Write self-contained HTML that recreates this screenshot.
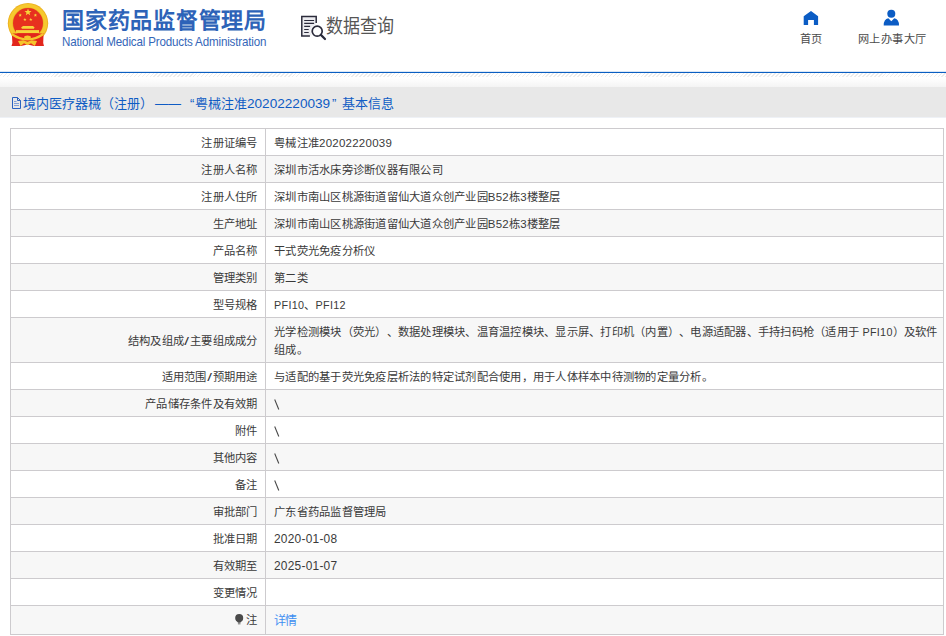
<!DOCTYPE html>
<html lang="zh-CN">
<head>
<meta charset="utf-8">
<style>
*{margin:0;padding:0;box-sizing:border-box;}
html,body{text-spacing-trim:space-all;width:946px;height:636px;overflow:hidden;background:#fff;font-family:"Liberation Sans",sans-serif;}
.abs{position:absolute;white-space:nowrap;}
.t-cn{left:62px;top:6px;font-size:22px;font-weight:bold;color:#2d63b8;line-height:30px;letter-spacing:0.75px;}
.t-en{left:62px;top:34.3px;font-size:11.6px;color:#3466b8;line-height:14px;letter-spacing:-0.16px;transform:scaleY(1.12);transform-origin:0 0;}
.sq-tx{left:326px;top:14px;font-size:17px;color:#555;line-height:24px;transform:scaleY(1.11);transform-origin:0 0;}
.nav-tx{font-size:11.2px;color:#4a4a4a;line-height:14px;letter-spacing:0.4px;}
.bl{left:0;top:71px;width:946px;height:2px;background:linear-gradient(rgba(10,94,194,0.15) 0,rgba(10,94,194,0.15) 1px,#0a5ec2 1px);}
.hatch{left:0;top:73px;width:946px;height:4px;
 background:repeating-linear-gradient(135deg,#fff 0,#fff 1.8px,#ececec 1.8px,#ececec 2.8px);}
.grad{left:0;top:78px;width:946px;height:9px;background:linear-gradient(#fff,#f4f4f4);}
.bar{left:0;top:87px;width:946px;height:31px;background:#e8e8e8;border-bottom:1px solid #eef1f6;}
.bt{font-size:13px;color:#0f5cc4;line-height:17px;top:94.7px;}
table{table-layout:fixed;position:absolute;left:10px;top:128px;width:934px;border-collapse:collapse;border:1px solid #c6c4c8;font-size:11.3px;color:#3a3a3a;letter-spacing:0.25px;}
td{border:1px solid #cdcbce;line-height:18px;padding:5px 8px 3px 8px;vertical-align:middle;}
.n{font-size:11.5px;}
.d{font-size:11.9px;}
.n2{font-size:10.8px;letter-spacing:0.3px;}
.sl{display:inline-block;transform:scaleX(1.5);margin:0 1.2px;}
.bs{vertical-align:-2px;}
td.l{width:255px;text-align:right;padding-right:7.5px;}
td{white-space:nowrap;}
tr:nth-child(even) td{background:#f7f7f7;}
tr.last td{padding-top:5px;padding-bottom:5px;}
a{color:#3f8ff2;text-decoration:none;font-size:12px;letter-spacing:-0.6px;position:relative;top:1px;}
</style>
</head>
<body>
<svg class="abs" style="left:0;top:0" width="56" height="56" viewBox="0 0 56 56">
  <circle cx="28" cy="23.2" r="20.2" fill="#eeb322"/>
  <circle cx="28" cy="23.2" r="19.2" fill="#f6c92e"/>
  <circle cx="28" cy="23" r="15.6" fill="#e8b020"/>
  <circle cx="28" cy="23" r="15.0" fill="#e7311f"/>
  <polygon points="28.00,8.50 28.91,10.94 31.52,11.06 29.48,12.68 30.17,15.19 28.00,13.75 25.83,15.19 26.52,12.68 24.48,11.06 27.09,10.94" fill="#f7d43a"/>
  <polygon points="20.20,13.40 20.64,14.59 21.91,14.64 20.92,15.43 21.26,16.66 20.20,15.96 19.14,16.66 19.48,15.43 18.49,14.64 19.76,14.59" fill="#f7d43a"/>
  <polygon points="35.40,13.40 35.84,14.59 37.11,14.64 36.12,15.43 36.46,16.66 35.40,15.96 34.34,16.66 34.68,15.43 33.69,14.64 34.96,14.59" fill="#f7d43a"/>
  <polygon points="24.90,17.80 25.34,18.99 26.61,19.04 25.62,19.83 25.96,21.06 24.90,20.36 23.84,21.06 24.18,19.83 23.19,19.04 24.46,18.99" fill="#f7d43a"/>
  <polygon points="30.80,17.80 31.24,18.99 32.51,19.04 31.52,19.83 31.86,21.06 30.80,20.36 29.74,21.06 30.08,19.83 29.09,19.04 30.36,18.99" fill="#f7d43a"/>
  <path d="M21.1 27.6 L23 25.9 H33 L34.6 27.6 L33.8 28.8 H22 Z" fill="#f7d43a"/>
  <rect x="16" y="30.1" width="23" height="3" fill="#f7d43a"/>
  <path d="M11.8 33.6 H43.6 L43.2 43 L44 46 H34 L27.6 44.5 L21 46 H11.5 L12.4 43 Z" fill="#e2261c"/>
  <path d="M11.6 34 Q27.5 45 43.4 34" fill="none" stroke="#f5c52c" stroke-width="2.2"/>
  <ellipse cx="27.5" cy="37.3" rx="3.4" ry="1.9" fill="#f5c52c"/>
  <path d="M18 41 L20.6 46 L24 43.3 L27.5 45.3 L31 43.3 L34.8 46 L37 41 L31.8 40.2 L27.5 41.8 L23.2 40.2 Z" fill="#f5c52c"/>
</svg>
<div class="abs t-cn">国家药品监督管理局</div>
<div class="abs t-en">National Medical Products Administration</div>
<svg class="abs" style="left:296px;top:10px" width="40" height="36" viewBox="296 10 40 36">
  <rect x="302.5" y="17.3" width="13" height="18" fill="#ececf0"/>
  <path d="M316.2 22.9 V16.6 H301.8 V35.9 H309.9" fill="none" stroke="#2b2b3b" stroke-width="1.5"/>
  <path d="M304.2 20.5 H314.1 M304.2 23.4 H314.1 M304.2 26.4 H310.1 M304.2 29.5 H308.7 M304.2 32.5 H308.7" stroke="#2b2b3b" stroke-width="1.2"/>
  <circle cx="317.2" cy="31.2" r="6.8" fill="#fff"/>
  <circle cx="317.2" cy="31.2" r="5.0" fill="#fff" stroke="#2b2b3b" stroke-width="1.7"/>
  <path d="M320.9 34.9 L325 39" stroke="#2b2b3b" stroke-width="2.2" stroke-linecap="round"/>
</svg>
<div class="abs sq-tx">数据查询</div>
<svg class="abs" style="left:796px;top:6px" width="30" height="22" viewBox="796 6 30 22">
  <path d="M811 10.9 L818.1 16.3 V25 H813.9 V19.9 H808.1 V25 H803.7 V16.3 Z" fill="#0b5cc4"/>
</svg>
<div class="abs nav-tx" style="left:800px;top:32px;letter-spacing:0.3px;">首页</div>
<svg class="abs" style="left:880px;top:6px" width="24" height="22" viewBox="880 6 24 22">
  <circle cx="891.3" cy="13.8" r="4" fill="#0b5cc4"/>
  <path d="M883.7 25.5 Q883.7 19 888.3 18.3 L891.3 21.3 L894.3 18.3 Q899 19 899 25.5 Z" fill="#0b5cc4"/>
</svg>
<div class="abs nav-tx" style="left:858px;top:32px;">网上办事大厅</div>
<div class="abs bl"></div>
<div class="abs hatch"></div>
<div class="abs grad"></div>
<div class="abs bar"></div>
<svg class="abs" style="left:10px;top:95px" width="14" height="16" viewBox="10 95 14 16">
  <path d="M12.5 97.5 H17.5 L20.5 100.5 V108.5 H12.5 Z" fill="none" stroke="#2a62c0" stroke-width="1"/>
  <path d="M17.5 97.5 V100.5 H20.5" fill="none" stroke="#2a62c0" stroke-width="1"/>
  <path d="M14 101.5 H16.5 M14 103.5 H19 M14 105.5 H19" stroke="#7f9fd8" stroke-width="1"/>
</svg>
<div class="abs bt" style="left:23px;">境内医疗器械（注册）</div>
<div class="abs bt" style="left:155px;">——</div>
<div class="abs bt" style="left:190px;">“</div>
<div class="abs bt" style="left:195px;">粤械注准<span style="font-size:13.6px">20202220039</span></div>
<div class="abs bt" style="left:332px;">”</div>
<div class="abs bt" style="left:342px;">基本信息</div>
<table>
<tr><td class="l">注册证编号</td><td>粤械注准<span class="n">20202220039</span></td></tr>
<tr><td class="l">注册人名称</td><td>深圳市活水床旁诊断仪器有限公司</td></tr>
<tr><td class="l">注册人住所</td><td>深圳市南山区桃源街道留仙大道众创产业园<span class="n">B52</span>栋<span class="n">3</span>楼整层</td></tr>
<tr><td class="l">生产地址</td><td>深圳市南山区桃源街道留仙大道众创产业园<span class="n">B52</span>栋<span class="n">3</span>楼整层</td></tr>
<tr><td class="l">产品名称</td><td>干式荧光免疫分析仪</td></tr>
<tr><td class="l">管理类别</td><td>第二类</td></tr>
<tr><td class="l">型号规格</td><td><span class="n2">PFI10</span>、<span class="n2">PFI12</span></td></tr>
<tr><td class="l">结构及组成<span class="sl">/</span>主要组成成分</td><td>光学检测模块（荧光）、数据处理模块、温育温控模块、显示屏、打印机（内置）、电源适配器、手持扫码枪（适用于 <span class="n2">PFI10</span>）及软件<br>组成。</td></tr>
<tr><td class="l">适用范围<span class="sl">/</span>预期用途</td><td>与适配的基于荧光免疫层析法的特定试剂配合使用，用于人体样本中待测物的定量分析。</td></tr>
<tr><td class="l">产品储存条件及有效期</td><td><svg class="bs" width="6" height="11" viewBox="0 0 6 11"><path d="M0.7 0.5 L4.8 10.5" stroke="#444" stroke-width="1.05"/></svg></td></tr>
<tr><td class="l">附件</td><td><svg class="bs" width="6" height="11" viewBox="0 0 6 11"><path d="M0.7 0.5 L4.8 10.5" stroke="#444" stroke-width="1.05"/></svg></td></tr>
<tr><td class="l">其他内容</td><td><svg class="bs" width="6" height="11" viewBox="0 0 6 11"><path d="M0.7 0.5 L4.8 10.5" stroke="#444" stroke-width="1.05"/></svg></td></tr>
<tr><td class="l">备注</td><td><svg class="bs" width="6" height="11" viewBox="0 0 6 11"><path d="M0.7 0.5 L4.8 10.5" stroke="#444" stroke-width="1.05"/></svg></td></tr>
<tr><td class="l">审批部门</td><td>广东省药品监督管理局</td></tr>
<tr><td class="l">批准日期</td><td><span class="d">2020-01-08</span></td></tr>
<tr><td class="l">有效期至</td><td><span class="d">2025-01-07</span></td></tr>
<tr><td class="l">变更情况</td><td></td></tr>
<tr class="last"><td class="l"><svg width="9" height="11" viewBox="0 0 9 11" style="vertical-align:-1px;margin-right:2px"><circle cx="4.2" cy="4.1" r="4" fill="#4a4a4a"/><path d="M1.6 6.3 H6.8 L5.4 8.8 H3 Z" fill="#4a4a4a"/><rect x="2.9" y="9.1" width="2.6" height="1.3" fill="#888"/></svg>注</td><td><a>详情</a></td></tr>
</table>
</body>
</html>
